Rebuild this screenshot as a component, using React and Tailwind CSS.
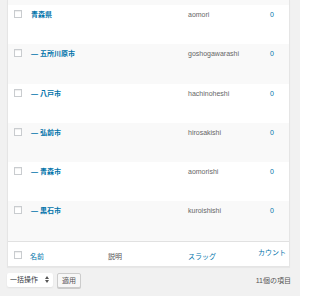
const rows = [
  { name: "青森県", slug: "aomori" },
  { name: "— 五所川原市", slug: "goshogawarashi" },
  { name: "— 八戸市", slug: "hachinoheshi" },
  { name: "— 弘前市", slug: "hirosakishi" },
  { name: "— 青森市", slug: "aomorishi" },
  { name: "— 黒石市", slug: "kuroishishi" },
];

const font = { fontFamily: '"Liberation Sans", "Noto Sans CJK JP", sans-serif' };

const Check = () => (
  <span className="block h-[8px] w-[8px] border border-[#c9cccf] bg-white shadow-[inset_0_1px_1px_rgba(0,0,0,0.07)]" />
);

const App = () => {
  return (
    <div
      style={font}
      className="h-[296px] w-[300px] overflow-hidden bg-[#f1f1f1] text-[7px] leading-[9px]"
    >
      <div className="ml-[7px] w-[283px] border-x border-b border-[#e5e5e5] shadow-[0_1px_1px_rgba(0,0,0,0.04)]">
        <div className="h-[5px] bg-[#f9f9f9]" />
        {rows.map((row, i) => (
          <div
            key={row.slug}
            className={`grid h-[39.3px] grid-cols-[22px_158px_65px_38px] ${
              i % 2 === 0 ? "bg-white" : "bg-[#f9f9f9]"
            }`}
          >
            <div className="pl-[6px] pt-[5px]">
              <Check />
            </div>
            <div className="pl-[1px] pt-[5px] font-semibold text-[#0073aa]">
              {row.name}
            </div>
            <div className="pt-[5px] text-[#666]">{row.slug}</div>
            <div className="pt-[5px] text-center text-[#0073aa]">0</div>
          </div>
        ))}
        <div className="grid h-[25px] grid-cols-[22px_78px_80px_65px_38px] border-t border-[#e1e1e1] bg-white">
          <div className="pl-[6px] pt-[9px]">
            <Check />
          </div>
          <div className="pt-[10px] text-[#0073aa]">名前</div>
          <div className="pt-[10px] text-[#555]">説明</div>
          <div className="pt-[10px] text-[#0073aa]">スラッグ</div>
          <div className="pt-[6px] text-center text-[#0073aa]">カウント</div>
        </div>
      </div>
      <div className="mt-[6px] flex items-start pl-[7px] pr-[9px]">
        <div className="flex h-[14px] w-[46px] items-center justify-between rounded-[2px] bg-white pl-[3px] pr-[4px] text-[#32373c] shadow-[0_1px_2px_rgba(0,0,0,0.07)]">
          <span>一括操作</span>
          <svg width="4" height="7" viewBox="0 0 4 7">
            <path d="M0 3 L2 0 L4 3 Z" fill="#555" />
            <path d="M0 4 L2 7 L4 4 Z" fill="#555" />
          </svg>
        </div>
        <button
          type="button"
          className="ml-[4px] h-[15px] w-[24px] rounded-[2px] border border-[#cccccc] bg-[#f7f7f7] text-[7px] text-[#555] shadow-[0_1px_0_#cccccc]"
        >
          適用
        </button>
        <span className="ml-auto pt-[3px] text-[#555]">11個の項目</span>
      </div>
    </div>
  );
};

export default App;
